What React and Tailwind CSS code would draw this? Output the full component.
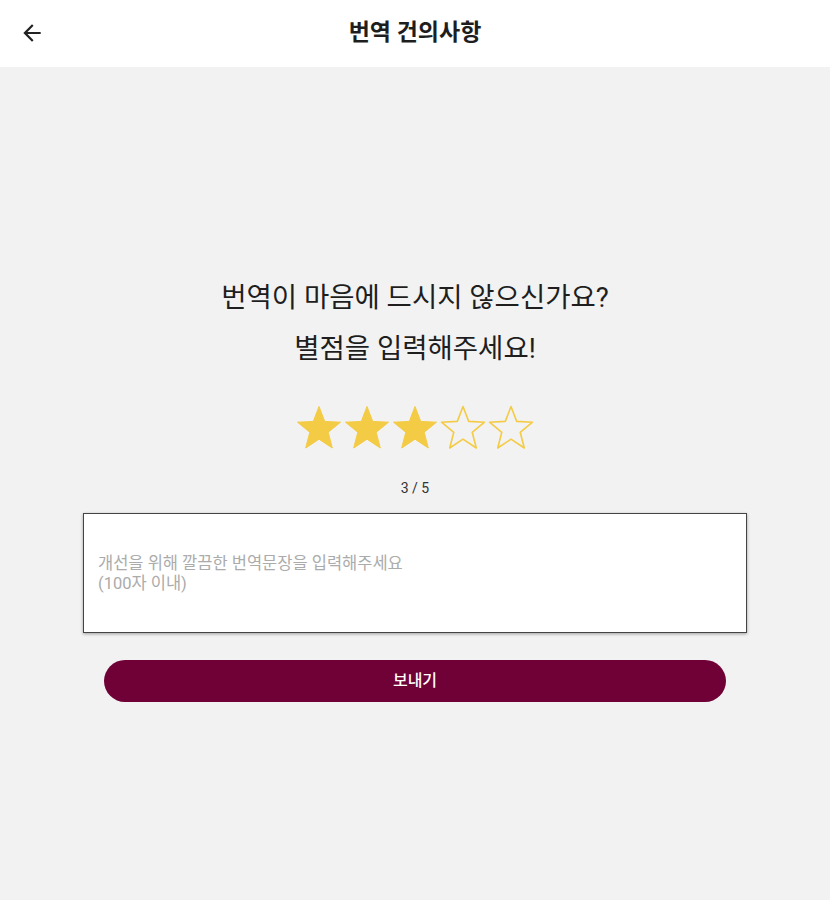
import React, { useState } from 'react';

const FONT = { fontFamily: 'Roboto, "Noto Sans CJK KR", sans-serif' };

const Star = ({ filled }) => (
  <svg width="48" height="48" viewBox="0 0 48 48">
    <polygon
      points="24,2.5 29.7,17.4 45.5,18.2 33.2,28.3 37.3,44 24,35.2 10.7,44 14.8,28.3 2.5,18.2 18.3,17.4"
      fill={filled ? '#f4cb45' : 'none'}
      stroke="#f4cb45"
      strokeWidth={filled ? 1 : 1.6}
      strokeLinejoin="round"
    />
  </svg>
);

const App = () => {
  const [rating, setRating] = useState(3);
  const [text, setText] = useState('');

  return (
    <div className="min-h-[900px] w-[830px] bg-[#f2f2f2] text-[#1e1e1e]" style={FONT}>
      {/* top bar */}
      <div className="relative flex h-[67px] items-center justify-center bg-white">
        <button className="absolute left-[19px] top-[20px]">
          <svg width="26" height="26" viewBox="0 0 24 24" fill="#222">
            <path d="M20 11H7.83l5.59-5.59L12 4l-8 8 8 8 1.41-1.41L7.83 13H20v-2z" />
          </svg>
        </button>
        <h1 className="text-[23px] font-bold">번역 건의사항</h1>
      </div>

      <div className="flex flex-col items-center pt-[205px]">
        <p className="text-[27.5px] leading-[51px]">번역이 마음에 드시지 않으신가요?</p>
        <p className="text-[27.5px] leading-[51px]">별점을 입력해주세요!</p>

        <div className="mt-[30px] flex">
          {[1, 2, 3, 4, 5].map((n) => (
            <button key={n} onClick={() => setRating(n)}>
              <Star filled={n <= rating} />
            </button>
          ))}
        </div>

        <div className="mt-[26px] text-[14px] leading-5 text-[#333]">{rating} / 5</div>

        <textarea
          value={text}
          onChange={(e) => setText(e.target.value)}
          maxLength={100}
          placeholder={'개선을 위해 깔끔한 번역문장을 입력해주세요\n(100자 이내)'}
          className="mt-[15px] h-[120px] w-[664px] resize-none border border-[#444] bg-white px-[14px] py-[40px] text-[16.5px] leading-5 shadow-[0_1px_3px_rgba(0,0,0,0.35)] outline-none placeholder:text-[#ababab]"
          style={FONT}
        />

        <button className="mt-[27px] h-[42px] w-[622px] rounded-full bg-[#6f0136] text-[16px] font-medium text-white">
          보내기
        </button>
      </div>
    </div>
  );
};

export default App;
